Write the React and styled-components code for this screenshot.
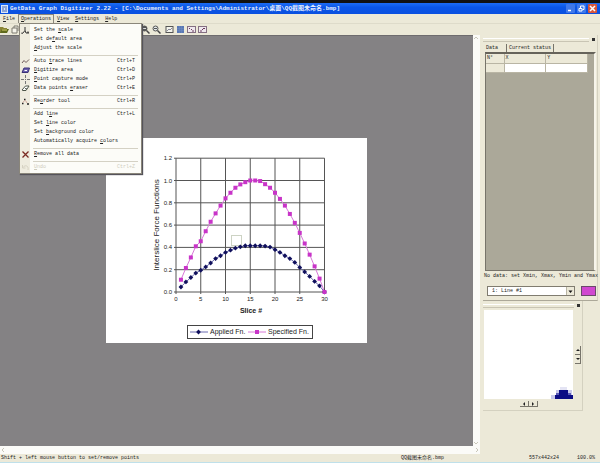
import React, { useState } from "react";
import styled, { createGlobalStyle } from "styled-components";

const COLORS = {
  face: "#ece9d8",
  shade: "#aca899",
  work: "#848284",
  title: "#0a55e6",
  pink: "#c834c8",
  navy: "#10105c",
};

const MENU_BAR = [
  ["", "F", "ile"],
  ["", "O", "perations"],
  ["", "V", "iew"],
  ["", "S", "ettings"],
  ["", "H", "elp"],
];

// text before the mnemonic, the mnemonic, text after it
const OPERATIONS = [
  { label: ["Set the ", "s", "cale"], icon: "scale" },
  { label: ["Set de", "f", "ault area"] },
  { label: ["", "A", "djust the scale"] },
  { line: true },
  { label: ["Auto ", "t", "race lines"], icon: "trace", keys: "Ctrl+T" },
  { label: ["", "D", "igitize area"], icon: "area", keys: "Ctrl+D" },
  { label: ["", "P", "oint capture mode"], icon: "point", keys: "Ctrl+P" },
  { label: ["Data points ", "e", "raser"], icon: "eraser", keys: "Ctrl+E" },
  { line: true },
  { label: ["Re", "o", "rder tool"], icon: "reorder", keys: "Ctrl+R" },
  { line: true },
  { label: ["Add l", "i", "ne"], keys: "Ctrl+L" },
  { label: ["Set ", "l", "ine color"] },
  { label: ["Set ", "b", "ackground color"] },
  { label: ["Automatically acquire ", "c", "olors"] },
  { line: true },
  { label: ["", "R", "emove all data"], icon: "remove" },
  { line: true },
  { label: ["", "U", "ndo"], icon: "undo", keys: "Ctrl+Z", off: true },
];

const SPECIFIED = [
  0.11, 0.215, 0.31, 0.41, 0.455, 0.545, 0.63, 0.705, 0.775, 0.84, 0.89, 0.935,
  0.965, 0.985, 1, 1, 0.995, 0.967, 0.935, 0.89, 0.835, 0.775, 0.7, 0.62, 0.53,
  0.435, 0.335, 0.23, 0.12, 0,
];

const APPLIED = [
  0.045, 0.09, 0.13, 0.17, 0.195, 0.225, 0.26, 0.3, 0.325, 0.355, 0.375, 0.393,
  0.405, 0.415, 0.415, 0.415, 0.415, 0.412, 0.403, 0.38, 0.355, 0.325, 0.3,
  0.265, 0.22, 0.18, 0.14, 0.095, 0.055, 0,
];

const px = (n) => 70 + n * 4.95;
const py = (v) => 154 - v * 111.5;
const toPoints = (arr) => arr.map((v, i) => `${px(i + 1)},${py(v)}`).join(" ");

function MenuIcon({ name }) {
  return (
    <svg width="9" height="9" viewBox="0 0 9 9" fill="none" aria-hidden="true">
      {name === "scale" && (
        <path d="M4 1v3.5L1.5 7.5M4 4.5L5 7h3M1 6.5v1.5M6 6.2h2" stroke="#333" />
      )}
      {name === "trace" && (
        <path d="M1 6l2-2.5 2 2 3-3" stroke="#6e5a5a" strokeWidth="1" />
      )}
      {name === "area" && (
        <>
          <path d="M1 6.5L3 2h5.500L7 6.500z" fill="#6a5fae" stroke="#3a3276" />
          <path d="M3.500 4.500h2.500" stroke="#fff" />
        </>
      )}
      {name === "point" && (
        <path d="M4.500 0v3M4.500 6v3M0 4.500h3M6 4.500h3M4 4.500h1" stroke="#777" />
      )}
      {name === "eraser" && (
        <path d="M1 6l3.500-4h3.500L5 6.500H1.500zM4 4.500L6 5" stroke="#4c5548" fill="#fff" />
      )}
      {name === "reorder" && (
        <>
          <path d="M1 6.500h1.500M3 2.500h1.500M6 7h2" stroke="#222" strokeWidth="1.400" />
          <path d="M2 5.500l1.500-2M4.500 3.500L6 6" stroke="#c98a80" strokeWidth="0.700" />
        </>
      )}
      {name === "remove" && (
        <path d="M1.500 1.500l6 6M7.500 1.500l-6 6" stroke="#7a2a22" strokeWidth="1.300" />
      )}
      {name === "undo" && (
        <path d="M1.500 2v3h3M2 4.500c2-3 6-2 5 2.500" stroke="#d6d2c2" />
      )}
    </svg>
  );
}

function ToolIcon({ name }) {
  return (
    <svg width="9" height="9" viewBox="0 0 9 9" fill="none" aria-hidden="true">
      {name === "open" && (
        <>
          <path d="M0 2h3l1 1h3v5H0z" fill="#8a8434" />
          <path d="M0 8l2-4h7L7 8z" fill="#5f6a1c" />
          <path d="M2 5h5" stroke="#d9cf6a" />
        </>
      )}
      {name === "paste" && (
        <path d="M1 3h5v5H1zM3 3V1h4v5" stroke="#7c7a70" fill="#f6f4ea" />
      )}
      {(name === "zoomin" || name === "zoomout") && (
        <>
          <circle cx="3.500" cy="3.500" r="2.500" stroke="#555" fill={name === "zoomin" ? "#555" : "#dfe4e6"} />
          <path d="M5.500 5.500L8.500 8.500" stroke="#444" strokeWidth="1.500" />
          <path d="M2 3.500h3" stroke={name === "zoomin" ? "#ddd" : "#555"} />
        </>
      )}
      {name === "fit" && (
        <>
          <rect x="1" y="1.500" width="7" height="6" fill="#f4f4ec" stroke="#555" />
          <path d="M2 6l2-2 1 1 2-2" stroke="#889" />
        </>
      )}
      {name === "grid" && (
        <>
          <rect x="1" y="1" width="7" height="7" fill="#5a78b4" />
          <path d="M1 3.500h7M1 5.500h7M3.500 1v7M5.500 1v7" stroke="#6f8cc4" strokeWidth="0.500" />
        </>
      )}
      {(name === "view1" || name === "view2") && (
        <>
          <rect x="0.500" y="1.500" width="8" height="6" fill="#efe8ee" stroke="#857083" />
          <path d={name === "view1" ? "M2 3.500h1M5 6h2M4 4l1 1" : "M2 6h2M5 3.500h2M4 5l1-1"} stroke="#6a3a5c" />
        </>
      )}
    </svg>
  );
}

function Chart() {
  return (
    <svg width="261" height="205" viewBox="0 0 261 205" role="img" aria-label="Interslice force functions">
      <rect width="261" height="205" fill="#fff" />
      <g stroke="#555" strokeWidth="1">
        {[0, 5, 10, 15, 20, 25, 30].map((n) => (
          <line key={n} x1={px(n)} x2={px(n)} y1={py(1.2)} y2={py(0) + 2} />
        ))}
        {[0, 0.2, 0.4, 0.6, 0.8, 1, 1.2].map((v) => (
          <line key={v} x1={px(0) - 2} x2={px(30)} y1={py(v)} y2={py(v)} />
        ))}
      </g>
      <ChartText $size={6}>
        {["0.0", "0.2", "0.4", "0.6", "0.8", "1.0", "1.2"].map((t) => (
          <text key={t} x="66" y={py(Number(t)) + 2} textAnchor="end">
            {t}
          </text>
        ))}
        {[0, 5, 10, 15, 20, 25, 30].map((n) => (
          <text key={n} x={px(n)} y="163" textAnchor="middle">
            {n}
          </text>
        ))}
      </ChartText>
      <ChartText $size={8}>
        <text transform="translate(53 87) rotate(-90)" textAnchor="middle">
          Interslice Force Functions
        </text>
      </ChartText>
      <ChartText $size={7} $bold>
        <text x="145" y="175" textAnchor="middle">
          Slice #
        </text>
      </ChartText>
      <rect x="125.500" y="97.500" width="10" height="10" fill="#fff" fillOpacity="0.600" stroke="#cdd3c4" />
      <polyline points={toPoints(APPLIED)} fill="none" stroke="#6a6ab0" strokeWidth="1" />
      {APPLIED.map((v, i) => (
        <Diamond key={i} x={px(i + 1)} y={py(v)} />
      ))}
      <polyline points={toPoints(SPECIFIED)} fill="none" stroke="#d878d8" strokeWidth="1" />
      {SPECIFIED.map((v, i) => (
        <rect key={i} x={px(i + 1) - 2} y={py(v) - 2} width="4" height="4" fill={COLORS.pink} />
      ))}
      <rect x="81.500" y="187.500" width="125" height="13" fill="#fff" stroke="#444" />
      <path d="M84 194h18" stroke="#6a6ab0" />
      <Diamond x={92.5} y={194} />
      <path d="M142 194h18" stroke="#d878d8" />
      <rect x="149" y="192" width="4" height="4" fill={COLORS.pink} />
      <ChartText $size={7}>
        <text x="104" y="196">
          Applied Fn.
        </text>
        <text x="162" y="196">
          Specified Fn.
        </text>
      </ChartText>
    </svg>
  );
}

function Diamond({ x, y }) {
  return (
    <path d={`M${x - 2.4} ${y}l2.4 -2.4l2.4 2.4l-2.4 2.4z`} fill={COLORS.navy} />
  );
}

function Label({ parts }) {
  return (
    <span>
      {parts[0]}
      <Mnemonic>{parts[1]}</Mnemonic>
      {parts[2]}
    </span>
  );
}

export default function App() {
  const [open, setOpen] = useState("Operations");
  const [tab, setTab] = useState("data");
  const [line, setLine] = useState("1");

  return (
    <Window>
      <GlobalStyle />
      <TitleBar>
        <svg width="7" height="8" viewBox="0 0 7 8" aria-hidden="true">
          <rect y="0" width="7" height="8" fill="#dce6f8" />
          <path d="M1 2h5M1 4h2M4 4h2M1 6h5" stroke="#3d62b4" />
        </svg>
        <Title>
          GetData Graph Digitizer 2.22 - [C:\Documents and
          Settings\Administrator\桌面\QQ截图未命名.bmp]
        </Title>
        <WindowButton aria-label="Minimize">
          <svg width="9" height="9" viewBox="0 0 9 9">
            <path d="M2 6.500h3" stroke="#fff" strokeWidth="1.500" />
          </svg>
        </WindowButton>
        <WindowButton aria-label="Restore">
          <svg width="9" height="9" viewBox="0 0 9 9" fill="none">
            <path d="M2 4.500h3v2.500H2zM3.500 4V2H7v3.500H5.500" stroke="#fff" />
          </svg>
        </WindowButton>
        <WindowButton aria-label="Close" $close>
          <svg width="9" height="9" viewBox="0 0 9 9">
            <path d="M2 2l5 5M7 2L2 7" stroke="#fff" strokeWidth="1.500" />
          </svg>
        </WindowButton>
      </TitleBar>

      <MenuBar>
        {MENU_BAR.map((parts) => {
          const name = parts.join("");
          return (
            <MenuHolder key={name}>
              <MenuButton
                $open={open === name}
                onClick={() => setOpen(open === name ? "" : name)}
              >
                <Label parts={parts} />
              </MenuButton>
              {name === "Operations" && open === name && (
                <Menu>
                  {OPERATIONS.map((item, i) =>
                    item.line ? (
                      <MenuLine key={i} />
                    ) : (
                      <MenuItem key={i} disabled={item.off}>
                        <MenuIcon name={item.icon} />
                        <Label parts={item.label} />
                        <span>{item.keys}</span>
                      </MenuItem>
                    )
                  )}
                </Menu>
              )}
            </MenuHolder>
          );
        })}
      </MenuBar>

      <ToolBar>
        <ToolGroup $width={141}>
          <ToolButton aria-label="Open image">
            <ToolIcon name="open" />
          </ToolButton>
          <ToolButton aria-label="Paste image">
            <ToolIcon name="paste" />
          </ToolButton>
        </ToolGroup>
        <ToolGroup $width={24}>
          <ToolButton aria-label="Zoom in">
            <ToolIcon name="zoomin" />
          </ToolButton>
          <ToolButton aria-label="Zoom out">
            <ToolIcon name="zoomout" />
          </ToolButton>
        </ToolGroup>
        <ToolGroup>
          <ToolButton aria-label="Fit to window">
            <ToolIcon name="fit" />
          </ToolButton>
          <ToolButton aria-label="Show grid">
            <ToolIcon name="grid" />
          </ToolButton>
          <ToolButton aria-label="Data window">
            <ToolIcon name="view1" />
          </ToolButton>
          <ToolButton aria-label="Magnifier window">
            <ToolIcon name="view2" />
          </ToolButton>
        </ToolGroup>
      </ToolBar>

      <Body>
        <Workspace>
          <Chart />
        </Workspace>
        <VerticalScroll>
          <Arrow d="M1 4l2-2 2 2" />
          <Arrow d="M1 2l2 2 2-2" />
        </VerticalScroll>
        <HorizontalScroll>
          <Arrow d="M4 1L2 3l2 2" />
          <Arrow d="M2 1l2 2-2 2" />
        </HorizontalScroll>

        <Side>
          <DataPanel>
            <Grip>
              <CloseDot aria-label="Close data panel" />
            </Grip>
            <Tabs>
              <Tab $active={tab === "data"} onClick={() => setTab("data")}>
                Data
              </Tab>
              <Tab $active={tab === "status"} onClick={() => setTab("status")}>
                Current status
              </Tab>
            </Tabs>
            <TableBox>
              <DataTable>
                <thead>
                  <tr>
                    <th>N°</th>
                    <th>X</th>
                    <th>Y</th>
                  </tr>
                </thead>
                <tbody>
                  <tr>
                    <th></th>
                    <td></td>
                    <td></td>
                  </tr>
                </tbody>
              </DataTable>
            </TableBox>
            <Note>No data: set Xmin, Xmax, Ymin and Ymax</Note>
            <LineRow>
              <LineField>
                <LineSelect
                  aria-label="Line"
                  value={line}
                  onChange={(e) => setLine(e.target.value)}
                >
                  <option value="1">1: Line #1</option>
                </LineSelect>
                <DropMark>
                  <svg width="7" height="7" viewBox="0 0 7 7" aria-hidden="true">
                    <path d="M1.500 2.500h4l-2 2.500z" fill="#111" />
                  </svg>
                </DropMark>
              </LineField>
              <Swatch aria-label="Line color" />
            </LineRow>
          </DataPanel>

          <ZoomPanel>
            <Grip>
              <CloseDot aria-label="Close magnifier" />
            </Grip>
            <ZoomRow>
              <ZoomView>
                <svg width="22" height="13" viewBox="0 0 22 13" aria-hidden="true">
                  <path d="M9 1h7v3H9z" fill="#e4e4f4" />
                  <path d="M5 4h3v5H5zM17 4h4v5h-4zM0 9h4v4H0z" fill="#c9c9ea" />
                  <path d="M4 9h4V4h9v5h5v4H4z" fill="#0c0c84" />
                  <path d="M5 7h3v2H5zM17 7h3v2h-3z" fill="#5a5ab4" />
                </svg>
              </ZoomView>
              <Spin $vertical>
                <SpinButton aria-label="Scroll up" $vertical>
                  <SpinMark d="M1 4l2-2 2 2z" />
                </SpinButton>
                <SpinButton aria-label="Scroll down" $vertical>
                  <SpinMark d="M1 2l2 2 2-2z" />
                </SpinButton>
              </Spin>
            </ZoomRow>
            <Spin>
              <SpinButton aria-label="Scroll left">
                <SpinMark d="M4 1L2 3l2 2z" />
              </SpinButton>
              <SpinButton aria-label="Scroll right">
                <SpinMark d="M2 1l2 2-2 2z" />
              </SpinButton>
            </Spin>
          </ZoomPanel>
        </Side>
      </Body>

      <StatusBar>
        <span>Shift + left mouse button to set/remove points</span>
        <span>QQ截图未命名.bmp</span>
        <span>557x442x24</span>
        <span>100.0%</span>
      </StatusBar>
    </Window>
  );
}

function Arrow({ d }) {
  return (
    <svg width="6" height="6" viewBox="0 0 6 6" fill="none" aria-hidden="true">
      <path d={d} stroke="#c9c7ba" />
    </svg>
  );
}

function SpinMark({ d }) {
  return (
    <svg width="6" height="6" viewBox="0 0 6 6" aria-hidden="true">
      <path d={d} fill="#222" />
    </svg>
  );
}

const GlobalStyle = createGlobalStyle`
  * {
    box-sizing: border-box;
  }
  body {
    margin: 0;
    background-color: ${COLORS.face};
  }
  body, button, select {
    font-family: "Liberation Mono", "Noto Sans CJK SC", monospace;
    font-size: 5px;
    line-height: 7px;
    color: #222;
  }
  button {
    display: flex;
    align-items: center;
    padding: 0;
    border: 0;
    background: none;
  }
  svg {
    display: block;
    flex: none;
  }
`;

const Window = styled.div`
  display: flex;
  flex-direction: column;
  min-height: 100vh;
  border-top: 3px solid #111;
  border-bottom: 1px solid #bfe0ea;
`;

const TitleBar = styled.header`
  display: flex;
  align-items: center;
  gap: 2px;
  height: 11px;
  padding: 0 3px 0 1px;
  background: linear-gradient(#1c6cf4, ${COLORS.title} 40%, #0a50e0);
`;

const Title = styled.h1`
  flex: 1;
  margin: 0;
  font-size: 6px;
  line-height: 9px;
  font-weight: 700;
  color: #e8f0ff;
  white-space: nowrap;
`;

const WindowButton = styled.button`
  width: 9px;
  height: 9px;
  border-radius: 1px;
  background-color: ${(props) => (props.$close ? "#d8563a" : "#3f78ea")};
`;

const MenuBar = styled.nav`
  display: flex;
  height: 10px;
  border-bottom: 1px solid #dedbca;
`;

const MenuHolder = styled.div`
  position: relative;
`;

const MenuButton = styled.button`
  height: 9px;
  padding: 0 2px;
  border: 1px solid ${(props) => (props.$open ? "#8a867a" : "transparent")};
  border-bottom: 0;
`;

const Mnemonic = styled.u`
  text-underline-offset: 1px;
`;

const Menu = styled.div`
  position: absolute;
  top: 9px;
  left: 1px;
  z-index: 1;
  width: 123px;
  padding: 2px 1px 1px;
  border: 1px solid #8a867a;
  background: linear-gradient(to right, #efecdf 10px, #fcfcf8 10px);
  box-shadow: 1px 1px 1px #55535a;
`;

const MenuItem = styled.button`
  display: grid;
  grid-template-columns: 9px 1fr auto;
  gap: 4px;
  width: 100%;
  height: 9px;
  padding-right: 5px;
  text-align: left;
  white-space: nowrap;

  &:disabled {
    color: #cfccbd;
  }
  & > :last-child {
    grid-column: 3;
  }
`;

const MenuLine = styled.hr`
  height: 1px;
  margin: 2px 2px 1px 12px;
  border: 0;
  background-color: #d4d1c4;
`;

const ToolBar = styled.div`
  display: flex;
  align-items: center;
  height: 11px;
`;

const ToolGroup = styled.div`
  display: flex;
  gap: 2px;
  width: ${(props) => (props.$width ? props.$width + "px" : "auto")};
`;

const ToolButton = styled.button`
  width: 9px;
  height: 9px;
`;

const Body = styled.main`
  flex: 1;
  display: grid;
  grid-template-columns: 1fr 7px 120px;
  grid-template-rows: 1fr 8px;
`;

const Workspace = styled.section`
  display: flex;
  align-items: center;
  justify-content: center;
  background-color: ${COLORS.work};
  box-shadow: inset 0 1px #6e6c6e;
`;

const VerticalScroll = styled.div`
  display: flex;
  flex-direction: column;
  justify-content: space-between;
  background-color: #fbfbf8;
`;

const HorizontalScroll = styled.div`
  grid-row: 2;
  grid-column: 1 / 3;
  display: flex;
  align-items: center;
  justify-content: space-between;
  background-color: #fbfbf8;
`;

const Side = styled.aside`
  grid-row: 1 / 3;
  grid-column: 3;
  padding: 0 2px 0 3px;
`;

const DataPanel = styled.section`
  padding-bottom: 4px;
  border-bottom: 1px solid ${COLORS.shade};
  border-right: 1px solid #d4d1c0;
`;

const ZoomPanel = styled.section`
  width: 100px;
  height: 110px;
  border-right: 1px solid #d4d1c0;
  border-bottom: 1px solid #d4d1c0;
`;

const Grip = styled.div`
  display: flex;
  align-items: center;
  gap: 3px;
  height: 9px;
  padding-right: 2px;

  &::before {
    content: "";
    flex: 1;
    height: 2px;
    border-top: 1px solid #fff;
    border-bottom: 1px solid #c9c5b4;
  }
`;

const CloseDot = styled.button`
  width: 3px;
  height: 3px;
  background-color: #333;
`;

const Tabs = styled.div`
  display: flex;
  height: 8px;
`;

const Tab = styled.button`
  padding: 0 2px;
  margin-right: ${(props) => (props.$active ? "5px" : "0")};
  border-left: 1px solid ${(props) => (props.$active ? "transparent" : "#77746a")};
  border-right: 1px solid ${(props) => (props.$active ? "transparent" : "#77746a")};
`;

const TableBox = styled.div`
  height: 219px;
  margin: 0 1px 0 2px;
  border: 1px solid #77746a;
  border-top: 2px solid #66635a;
  border-right: 2px solid #f6f4ea;
  background-color: #aba899;
`;

const DataTable = styled.table`
  width: 102px;
  table-layout: fixed;
  border-collapse: collapse;

  th,
  td {
    height: 9px;
    padding: 0 1px;
    border: 1px solid #b9b5a4;
    border-top: 0;
    border-left: 0;
    text-align: left;
    font-weight: 400;
  }
  th {
    background-color: ${COLORS.face};
  }
  td {
    background-color: #fff;
  }
  th:first-child {
    width: 18px;
  }
`;

const Note = styled.p`
  margin: 2px 0 6px 1px;
  white-space: nowrap;
`;

const LineRow = styled.div`
  display: flex;
  justify-content: space-between;
  padding: 0 1px 0 4px;
`;

const LineField = styled.div`
  display: flex;
  width: 88px;
  height: 10px;
  border: 1px solid #807c70;
  background-color: #fff;
`;

const LineSelect = styled.select`
  flex: 1;
  appearance: none;
  padding: 0 4px;
  border: 0;
  background: none;
`;

const DropMark = styled.span`
  display: flex;
  align-items: center;
  background-color: ${COLORS.face};
  border-left: 1px solid #b9b5a4;
  pointer-events: none;
`;

const Swatch = styled.button`
  width: 15px;
  height: 10px;
  border: 1px solid #6a4a6a;
  background-color: #d048d0;
`;

const ZoomRow = styled.div`
  display: flex;
  align-items: center;
  gap: 2px;
  padding-left: 1px;
`;

const ZoomView = styled.div`
  display: flex;
  align-items: flex-end;
  justify-content: flex-end;
  width: 89px;
  height: 89px;
  background-color: #fff;
`;

const Spin = styled.div`
  display: flex;
  flex-direction: ${(props) => (props.$vertical ? "column" : "row")};
  justify-content: center;
  padding: ${(props) => (props.$vertical ? "0" : "2px 8px 0 0")};
`;

const SpinButton = styled.button`
  justify-content: center;
  width: ${(props) => (props.$vertical ? "6px" : "9px")};
  height: ${(props) => (props.$vertical ? "9px" : "6px")};
  border-right: 1px solid #77746a;
  border-bottom: 1px solid #77746a;
`;

const StatusBar = styled.footer`
  display: grid;
  grid-template-columns: 1fr 128px 48px 23px;
  align-items: center;
  height: 8px;
  padding-left: 1px;
  white-space: nowrap;
`;

const ChartText = styled.g`
  font-family: "Liberation Sans", Arial, sans-serif;
  font-size: ${(props) => props.$size}px;
  font-weight: ${(props) => (props.$bold ? 700 : 400)};
  fill: #222;
`;
